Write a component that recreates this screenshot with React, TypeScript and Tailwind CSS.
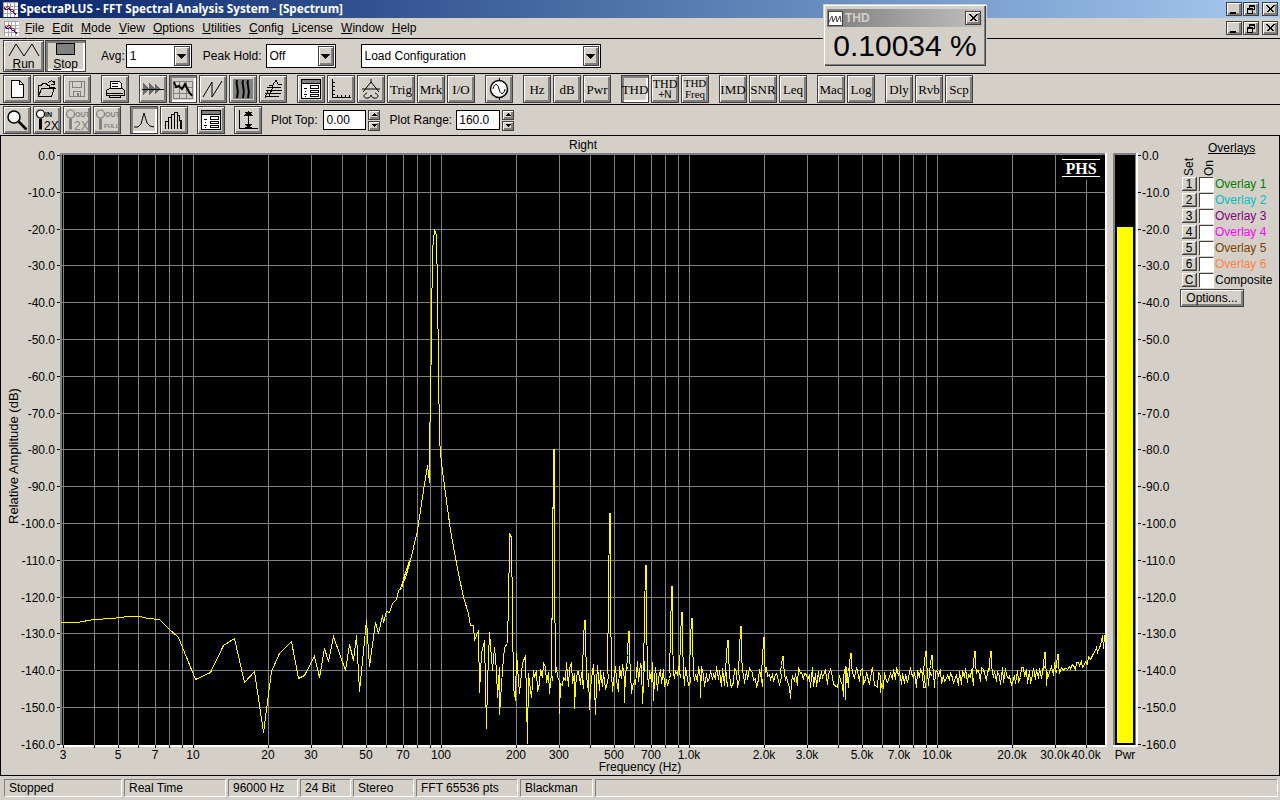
import React from "react";

const SANS = "font-['Liberation_Sans',Arial,sans-serif]";
const RAISED = "border border-[#404040] shadow-[inset_1px_1px_0_#ffffff,inset_-2px_-2px_0_#808080]";
const PRESSED = "border border-[#404040] shadow-[inset_2px_2px_0_#808080,inset_-2px_-2px_0_#ffffff]";

function Btn({ children, pressed, className = "" }: { children?: React.ReactNode; pressed?: boolean; className?: string }) {
  return (
    <div className={`w-[28px] h-[28px] shrink-0 flex flex-col items-center justify-center bg-[#d4d0c8] leading-none ${pressed ? PRESSED : RAISED} ${className}`}>
      {children}
    </div>
  );
}

function Ico({ children }: { children: React.ReactNode }) {
  return (
    <svg width="22" height="22" viewBox="0 0 22 22" shapeRendering="crispEdges" fill="none" stroke="#000" strokeWidth="1">
      {children}
    </svg>
  );
}

function TextBtn({ t, pressed }: { t: string; pressed?: boolean }) {
  return (
    <Btn pressed={pressed}>
      <span className="font-['Liberation_Serif',serif] text-[13px] text-black">{t}</span>
    </Btn>
  );
}

function Arrow() {
  return (
    <svg width="9" height="5" viewBox="0 0 9 5" shapeRendering="crispEdges">
      <path d="M0 0h9L4.5 5z" fill="#000" />
    </svg>
  );
}

function Select({ value, w }: { value: string; w: string }) {
  return (
    <div className={`h-[24px] ${w} border border-black bg-white flex items-center justify-between pl-[3px] pr-[1px] text-[12px] text-black`}>
      <span>{value}</span>
      <div className={`w-[16px] h-[20px] bg-[#d4d0c8] flex items-center justify-center ${RAISED}`}>
        <Arrow />
      </div>
    </div>
  );
}

function Spin() {
  return (
    <div className="flex flex-col gap-[1px] ml-[2px]">
      <div className={`w-[12px] h-[10px] bg-[#d4d0c8] flex items-center justify-center ${RAISED}`}>
        <svg width="5" height="3" viewBox="0 0 5 3" shapeRendering="crispEdges"><path d="M0 3h5L2.5 0z" fill="#000" /></svg>
      </div>
      <div className={`w-[12px] h-[10px] bg-[#d4d0c8] flex items-center justify-center ${RAISED}`}>
        <svg width="5" height="3" viewBox="0 0 5 3" shapeRendering="crispEdges"><path d="M0 0h5L2.5 3z" fill="#000" /></svg>
      </div>
    </div>
  );
}

function WinBtn({ kind }: { kind: "min" | "max" | "x" }) {
  return (
    <div className={`w-[16px] h-[14px] bg-[#d4d0c8] flex items-center justify-center ${RAISED} border-[#404040]`}>
      <svg width="10" height="9" viewBox="0 0 10 9" shapeRendering="crispEdges" fill="none" stroke="#000">
        {kind === "min" && <path d="M1 7.5h6M1 8.5h6" />}
        {kind === "max" && <path d="M3.5 2.5v-2h5v4h-2M3.5 1.5h5M1.5 3.5h5v5h-5zM1.5 4.5h5" />}
        {kind === "x" && <path d="M1.5 .5l7 7M2.5 .5l7 7M8.5 .5l-7 7M9.5 .5l-7 7" />}
      </svg>
    </div>
  );
}

function FormIcon() {
  return (
    <Ico>
      <rect x="1.5" y="1.5" width="19" height="19" fill="#fff" />
      <rect x="2" y="2" width="18" height="3" fill="#808080" stroke="none" />
      <path d="M1.5 5.5h19" />
      <rect x="10.5" y="7.5" width="8" height="3" />
      <rect x="10.5" y="12.5" width="8" height="2" />
      <rect x="10.5" y="16.5" width="8" height="2" />
      <path d="M4 10h3M5 13h1M4 16h3M5 18h1" />
    </Ico>
  );
}

function MagGlass({ color = "#000", kind }: { color?: string; kind: "in" | "out" | "full" }) {
  const word = kind === "in" ? "IN" : "OUT";
  return (
    <svg width="25" height="25" viewBox="0 0 25 25" fill="none">
      <circle cx="5.5" cy="6" r="4" stroke={color} strokeWidth="1.2" fill={kind === "in" ? "#fff" : "none"} />
      <path d="M5.5 10.5v11" stroke={color} strokeWidth="3" />
      <text x="10" y="9" fontSize="7" fontWeight="700" fill={color} fontFamily="Liberation Sans, Arial, sans-serif">{word}</text>
      {kind === "full"
        ? <text x="9" y="20" fontSize="6" fontWeight="700" fill={color} fontFamily="Liberation Sans, Arial, sans-serif">FULL</text>
        : <text x="9" y="22" fontSize="12" fill={color} fontFamily="Liberation Sans, Arial, sans-serif">2X</text>}
    </svg>
  );
}

const F0 = 441;
const DEC = 248;
const fx = (f: number) => Math.round(F0 + Math.log10(f / 100) * DEC);
const dy = (db: number) => Math.round(155 - (db / 10) * 36.8);

const gridF: number[] = [];
[10, 100, 1000, 10000].forEach((d) => {
  for (let i = 1; i < 10; i++) {
    const f = d * i;
    if (f <= 40000) gridF.push(f);
  }
});
gridF.push(3, 4, 5, 6, 7, 8, 9);

const xLabels: [number, string][] = [
  [3, "3"], [5, "5"], [7, "7"], [10, "10"], [20, "20"], [30, "30"], [50, "50"], [70, "70"], [100, "100"], [200, "200"], [300, "300"], [500, "500"], [700, "700"],
  [1000, "1.0k"], [2000, "2.0k"], [3000, "3.0k"], [5000, "5.0k"], [7000, "7.0k"], [10000, "10.0k"], [20000, "20.0k"], [30000, "30.0k"], [40000, "40.0k"],
];

const z7 = [[60,187],[110,187],[160,178],[215,173],[265,169],[298,169],[325,174],[358,177],[385,203],[415,232],[465,357],[510,335],[548,255],[583,235],[613,367],[642,333],[668,515],[692,333],[718,280],[753,243],[773,354],[792,345],[822,287],[838,352],[853,265],[865,302],[880,229],[915,330],[928,253],[938,300],[948,225],[958,392],[978,180],[988,317],[1005,185],[1015,220],[1025,165],[1030,187],[1038,152],[1047,157],[1055,128],[1068,118],[1075,90],[1085,82],[1090,58],[1098,45],[1108,0]];
const z8a = [[0,445],[15,410],[30,360],[50,270],[70,150],[82,75],[86,125]];
const peak = [[429,440],[430,405],[432,250],[434,229],[436,235],[437,290],[439,440]];
const z8b = [[122,70],[135,160],[150,270],[170,385],[190,470],[205,520],[210,555],[218,555],[222,600],[235,570],[238,757],[243,640],[253,600],[258,865],[260,730],[266,575],[275,690],[283,620],[288,690],[290,770],[296,680],[298,823],[305,690],[312,620],[320,610],[324,480],[326,320],[328,278],[333,290],[336,520],[338,740],[344,780],[349,640],[356,760],[366,670],[374,645],[380,910],[384,700],[392,770],[400,690]];

type Spike = [number, number, number];
const spikes: Spike[] = [
  [553, 449, 570], [584, 620, 640], [609, 513, 598], [628, 631, 655], [645, 565, 617], [671, 586, 637], [681, 612, 640], [691, 618, 640],
  [727, 640, 655], [740, 626, 652], [763, 637, 660], [782, 656, 665], [850, 653, 665], [925, 651, 662], [931, 655, 665], [974, 651, 665], [990, 651, 665], [1044, 652, 665], [1057, 654, 665],
];
const dips: [number, number][] = [[559, 713], [574, 708], [589, 709], [595, 714], [624, 702], [642, 703], [653, 700], [700, 697], [790, 698], [843, 696], [845, 699], [880, 692], [1046, 685]];

function buildTrace(): string {
  const pts: number[][] = [];
  z7.forEach(([x, y]) => pts.push([40 + x / 3, 560 + y / 3]));
  z8a.forEach(([x, y]) => pts.push([400 + x / 3, 440 + y / 3]));
  peak.forEach((p) => pts.push(p));
  z8b.forEach(([x, y]) => pts.push([400 + x / 3, 440 + y / 3]));
  let seed = 12345;
  const rnd = () => {
    seed = (seed * 1664525 + 1013904223) >>> 0;
    return seed / 4294967296;
  };
  const base = (x: number) => {
    if (x < 1000) return 677;
    if (x < 1060) return 677 - ((x - 1000) / 60) * 7;
    if (x < 1085) return 670 - ((x - 1060) / 25) * 8;
    return 662 - ((x - 1085) / 18) * 20;
  };
  const amp = (x: number) => (x < 700 ? 16 : x < 900 ? 11 : x < 1060 ? 10 : 4);
  let sp = 0;
  let dp = 0;
  let up = true;
  for (let x = 534; x < 1101; x += 1.5) {
    while (sp < spikes.length && spikes[sp][0] <= x) {
      const [sx, top, mid] = spikes[sp++];
      pts.push([sx - 2, 670], [sx - 1, mid], [sx, top], [sx + 1, top], [sx + 1, mid], [sx + 2, 672]);
      x = sx + 2.5;
    }
    while (dp < dips.length && dips[dp][0] <= x) {
      pts.push([dips[dp][0], dips[dp][1]]);
      dp++;
    }
    const a = amp(x);
    const r = rnd();
    const y = base(x) + (up ? -1 : 1) * Math.pow(r, 1.3) * a;
    up = rnd() > 0.3 ? !up : up;
    pts.push([x, y]);
  }
  pts.push([1102, 635], [1103, 648], [1104, 635]);
  return "M" + pts.map(([x, y]) => `${Math.round(x) + 0.5} ${Math.round(y) + 0.5}`).join("L");
}

const trace = buildTrace();

function Chart() {
  const gridStroke = "#808080";
  const dbs = Array.from({ length: 17 }, (_, i) => i * 10 * -1 || 0);
  const txt = { fontFamily: "Liberation Sans, Arial, sans-serif", fontSize: 12, fill: "#000" };
  return (
    <svg width="1175" height="639" viewBox="1 136 1175 639" className="shrink-0 block">
      <text x="583" y="149" textAnchor="middle" {...txt}>Right</text>
      <g shapeRendering="crispEdges">
        <rect x="60" y="153" width="1045" height="2" fill="#808080" />
        <rect x="60" y="153" width="2" height="592" fill="#808080" />
        <rect x="1105" y="153" width="2" height="594" fill="#fff" />
        <rect x="60" y="745" width="1047" height="2" fill="#fff" />
        <rect x="62" y="155" width="1043" height="590" fill="#000" />
        {gridF.map((f) => (
          <g key={f}>
            <rect x={fx(f)} y="155" width="1" height="590" fill={gridStroke} />
            <rect x={fx(f)} y="745" width="1" height="3" fill="#000" />
          </g>
        ))}
        {dbs.slice(1, 16).map((d) => (
          <rect key={d} x="62" y={dy(d)} width="1043" height="1" fill={gridStroke} />
        ))}
        {dbs.map((d) => (
          <rect key={d} x="57" y={dy(d)} width="3" height="1" fill="#000" />
        ))}
        <rect x="1058" y="155" width="47" height="25" fill="#000" />
        <path d={trace} fill="none" stroke="#ffff00" strokeWidth="1" />
        <rect x="1062" y="159" width="38" height="1" fill="#fff" />
        <rect x="1062" y="176" width="38" height="1" fill="#fff" />

        <rect x="1113" y="153" width="23" height="592" fill="#808080" />
        <rect x="1115" y="155" width="20" height="590" fill="#000" />
        <rect x="1136" y="153" width="2" height="594" fill="#fff" />
        <rect x="1113" y="745" width="25" height="2" fill="#fff" />
        <rect x="1117" y="227" width="16" height="516" fill="#ffff00" />
        {dbs.map((d) => (
          <rect key={d} x="1138" y={dy(d)} width="3" height="1" fill="#000" />
        ))}
      </g>
      <text x="1081" y="174" textAnchor="middle" fontFamily="Liberation Serif, serif" fontWeight="700" fontSize="16" fill="#fff">PHS</text>
      {dbs.map((d) => (
        <text key={d} x="55" y={dy(d) + 5} textAnchor="end" {...txt}>{d === 0 ? "0.0" : `${d}.0`}</text>
      ))}
      {dbs.map((d) => (
        <text key={d} x="1142" y={dy(d) + 5} {...txt}>{d === 0 ? "0.0" : `${d}.0`}</text>
      ))}
      {xLabels.map(([f, l]) => (
        <text key={f} x={fx(f)} y="759" textAnchor="middle" {...txt}>{l}</text>
      ))}
      <text x="1125" y="759" textAnchor="middle" {...txt}>Pwr</text>
      <text x="640" y="771" textAnchor="middle" {...txt}>Frequency (Hz)</text>
      <text transform="translate(18 456) rotate(-90)" textAnchor="middle" {...txt} fontSize="13">Relative Amplitude (dB)</text>
    </svg>
  );
}

const overlays: [string, string, string][] = [
  ["1", "Overlay 1", "text-[#008000]"],
  ["2", "Overlay 2", "text-[#00c0c0]"],
  ["3", "Overlay 3", "text-[#800080]"],
  ["4", "Overlay 4", "text-[#ff00ff]"],
  ["5", "Overlay 5", "text-[#804000]"],
  ["6", "Overlay 6", "text-[#ff8040]"],
  ["C", "Composite", "text-black"],
];

function OverlayPanel() {
  return (
    <div className="w-[103px] shrink-0 flex flex-col text-[12px] leading-none text-black">
      <div className="pl-[32px] pt-[6px] h-[20px] underline">Overlays</div>
      <div className="flex h-[20px] pl-[7px] gap-[4px]">
        <div className="w-[12px] [writing-mode:vertical-rl] rotate-180 text-left">Set</div>
        <div className="w-[12px] ml-[4px] [writing-mode:vertical-rl] rotate-180 text-left">On</div>
      </div>
      <div className="flex flex-col">
        {overlays.map(([n, l, c]) => (
          <div key={n} className="flex items-center h-[16px] pl-[6px]">
            <div className={`w-[15px] h-[14px] bg-[#d4d0c8] flex items-center justify-center border-b border-r border-[#404040] shadow-[inset_1px_1px_0_#ffffff,inset_-1px_-1px_0_#808080]`}>{n}</div>
            <div className="w-[14px] h-[14px] ml-[2px] bg-white border-t border-l border-[#404040] shadow-[1px_1px_0_#ffffff]" />
            <span className={`ml-[2px] whitespace-nowrap ${c}`}>{l}</span>
          </div>
        ))}
      </div>
      <div className={`mt-[1px] ml-[4px] w-[64px] h-[18px] bg-[#d4d0c8] flex items-center justify-center ${RAISED}`}>Options...</div>
    </div>
  );
}

const status: [string, string][] = [
  ["Stopped", "w-[118px]"], ["Real Time", "w-[102px]"], ["96000 Hz", "w-[70px]"], ["24 Bit", "w-[51px]"], ["Stereo", "w-[61px]"], ["FFT 65536 pts", "w-[102px]"], ["Blackman", "w-[73px]"], ["", "flex-1"],
];

const menus = ["File", "Edit", "Mode", "View", "Options", "Utilities", "Config", "License", "Window", "Help"];

function AppIcon({ s }: { s: number }) {
  return (
    <svg width={s} height={s} viewBox="0 0 16 16" shapeRendering="crispEdges" className="shrink-0">
      <rect width="16" height="16" fill="#fff" />
      <path d="M0 .5h16M.5 0v16M4.5 0v16M8.5 0v16M12.5 0v16M0 4.5h16M0 8.5h16M0 12.5h16" stroke="#a0a0a0" />
      <path d="M1 5l2 2 2-3 3 4 2-1 2 5 2 1" fill="none" stroke="#c00000" />
      <path d="M1 7l3 1 2-1 3 3 2 1 3 3" fill="none" stroke="#0000c0" />
    </svg>
  );
}

export default function App() {
  return (
    <div className={`${SANS} relative w-[1280px] h-[800px] overflow-hidden bg-[#d4d0c8] flex flex-col text-[12px] text-black`}>
      {/* Title bar */}
      <div className="h-[18px] shrink-0 flex items-center bg-gradient-to-r from-[#0a246a] to-[#a6caf0] pl-[3px] pr-[2px]">
        <AppIcon s={15} />
        <span className="ml-[2px] font-['Noto_Sans',sans-serif] font-bold text-[11.7px] text-white whitespace-nowrap leading-none">SpectraPLUS - FFT Spectral Analysis System - [Spectrum]</span>
        <div className="ml-auto flex gap-[1px]">
          <WinBtn kind="min" /><WinBtn kind="max" /><div className="w-px" /><WinBtn kind="x" />
        </div>
      </div>
      {/* Menu */}
      <div className="h-[21px] shrink-0 flex items-center pl-[4px] pr-[2px] border-b border-black">
        <AppIcon s={15} />
        <div className="ml-[6px] flex gap-[8px] whitespace-nowrap">
          {menus.map((m) => (
            <span key={m}><span className="underline">{m[0]}</span>{m.slice(1)}</span>
          ))}
        </div>
        <div className="ml-auto flex gap-[1px]">
          <WinBtn kind="min" /><WinBtn kind="max" /><div className="w-px" /><WinBtn kind="x" />
        </div>
      </div>
      {/* Row 1 */}
      <div className="h-[35px] shrink-0 flex items-center pl-[3px] border-b border-black">
        <div className={`w-[41px] h-[32px] flex flex-col items-center justify-center ${RAISED}`}>
          <svg width="32" height="14" viewBox="0 0 32 14" fill="none" stroke="#000"><path d="M1 13L8 1l8 12 8-12 7 12" /></svg>
          <span className="leading-none mt-[1px]"><span className="underline">R</span>un</span>
        </div>
        <div className={`w-[41px] h-[32px] ml-[1px] flex flex-col items-center justify-center ${PRESSED}`}>
          <div className="w-[19px] h-[12px] bg-[#808080] border border-black" />
          <span className="leading-none mt-[3px]"><span className="underline">S</span>top</span>
        </div>
        <span className="ml-[15px] mr-[1px]">Avg:</span>
        <Select value="1" w="w-[66px]" />
        <span className="ml-[11px] mr-[4px] whitespace-nowrap">Peak Hold:</span>
        <Select value="Off" w="w-[70px]" />
        <div className="ml-[25px]"><Select value="Load Configuration" w="w-[240px]" /></div>
      </div>
      {/* Row 2 */}
      <div className="h-[31px] shrink-0 flex items-center pl-[3px] gap-[2px] border-b border-black">
        <Btn><Ico><path d="M5.5 2.5h8l4 4v13h-12z" fill="#fff" /><path d="M13.5 2.5v4h4" /></Ico></Btn>
        <Btn><Ico><path d="M2.5 18.5v-11h3l1 -2h4l1 2h2v2h5l-3 9z" fill="#d4d0c8" /><path d="M2.5 18.5l3-8h14" /><path d="M12 5c2-3 5-3 6 0M18 3v3h-3" /></Ico></Btn>
        <Btn><Ico><g stroke="#808080"><path d="M3.5 3.5h15v15h-15z" /><path d="M6.5 3.5v6h9v-6M7.5 18.5v-5h7v5" /></g><rect x="11" y="15" width="2" height="3" fill="#808080" stroke="none" /></Ico></Btn>
        <Btn className="ml-[8px]"><Ico><path d="M6.5 10.5v-7l9 0 2 2v5" fill="#fff" /><path d="M2.5 12.5l3-2h13l2 2v5h-18z" fill="#d4d0c8" /><path d="M3 15h16M5.5 17.5v2h11v-2" /><rect x="8" y="5" width="6" height="1" fill="#000" stroke="none" /><rect x="8" y="8" width="6" height="1" fill="#000" stroke="none" /></Ico></Btn>
        <Btn className="ml-[8px]"><Ico><path d="M1 5l6 6-6 6zM7 4l6 7-6 7zM13 5l5 6-5 6z" fill="#6a6a6a" stroke="none" /><path d="M0 11h22" /></Ico></Btn>
        <Btn pressed><Ico><path d="M1.5 3.5h19v17h-19zM7.5 3.5v17M14.5 3.5v17M1.5 9.5h19M1.5 15.5h19" stroke="#808080" /><path d="M2 4l2 5 3-1 3 3 3-5 2 4 2 4 3 4" strokeWidth="2" shapeRendering="auto" /></Ico></Btn>
        <Btn><Ico><path d="M1 19L10 4v15L20 3" shapeRendering="auto" /></Ico></Btn>
        <Btn><Ico><rect x="1" y="1" width="20" height="20" fill="#808080" stroke="none" /><path d="M5 2c-2 5 3 8 0 18M11 2c-2 5 3 8 0 18M16 2c-2 5 3 8 0 18" strokeWidth="2" shapeRendering="auto" /></Ico></Btn>
        <Btn><Ico><path d="M3 19l5-1h9M3 16l5-1h11M4 13l5-1h11M5 10l5-1h9M7 8l4-1 3-5 2 4h4" /><path d="M3 20l3-8M7 19l4-11" /></Ico></Btn>
        <Btn className="ml-[8px]"><FormIcon /></Btn>
        <Btn><Ico><path d="M2.5 1v18.5H21" /><path d="M2 4h3M2 8h3M2 12h3M2 16h3M7 17v3M11 17v3M15 17v3M19 17v3" /></Ico></Btn>
        <Btn><Ico><path d="M11 1v4M11 4L3 14M11 4l8 10M2 11h18M7 15c-5 2-3 6 1 5 2 0 2-1 3-3 1 2 1 3 3 3 4 1 6-3 1-5" shapeRendering="auto" /></Ico></Btn>
        <TextBtn t="Trig" /><TextBtn t="Mrk" /><TextBtn t="I/O" />
        <Btn className="ml-[8px]"><Ico><circle cx="11" cy="11" r="8.5" fill="#fff" strokeWidth="1.5" shapeRendering="auto" /><path d="M11 0v3M11 19v3" /><path d="M5 11c1-6 5-6 6 0s5 6 6 0" shapeRendering="auto" /></Ico></Btn>
        <div className="ml-[8px]"><TextBtn t="Hz" /></div>
        <TextBtn t="dB" /><TextBtn t="Pwr" />
        <div className="ml-[8px]"><Btn pressed><span className="text-[13px] font-['Liberation_Serif',serif]">THD</span></Btn></div>
        <Btn><span className="font-['Liberation_Serif',serif] text-[12px]">THD</span><span className="text-[10px]">+N</span></Btn>
        <Btn><span className="font-['Liberation_Serif',serif] text-[11px]">THD</span><span className="font-['Liberation_Serif',serif] text-[11px]">Freq</span></Btn>
        <div className="ml-[8px]"><TextBtn t="IMD" /></div>
        <TextBtn t="SNR" /><TextBtn t="Leq" />
        <div className="ml-[8px]"><TextBtn t="Mac" /></div>
        <TextBtn t="Log" />
        <div className="ml-[8px]"><TextBtn t="Dly" /></div>
        <TextBtn t="Rvb" /><TextBtn t="Scp" />
      </div>
      {/* Row 3 */}
      <div className="h-[31px] shrink-0 flex items-center pl-[3px] border-b border-black">
        <div className="flex gap-[2px]">
          <Btn><Ico><circle cx="8" cy="8" r="6" fill="#fff" strokeWidth="1.5" shapeRendering="auto" /><path d="M12.5 12.5l8 8" strokeWidth="2.5" shapeRendering="auto" /></Ico></Btn>
          <Btn><MagGlass kind="in" /></Btn>
          <Btn><MagGlass kind="out" color="#808080" /></Btn>
          <Btn><MagGlass kind="full" color="#808080" /></Btn>
        </div>
        <div className="flex gap-[2px] ml-[9px]">
          <Btn pressed><Ico><path d="M1 18h4l3-3 3-11 3 10 3 3 4 1" shapeRendering="auto" /></Ico></Btn>
          <Btn><Ico><path d="M2.5 20v-8h3v-4h3v-3h3v-2h3v3h2v5h2v9M5.5 12v8M8.5 8v12M11.5 5v15M14.5 6v14M17.5 11v9" /></Ico></Btn>
        </div>
        <div className="ml-[9px]"><Btn><FormIcon /></Btn></div>
        <div className="ml-[9px]"><Btn><Ico><path d="M2.5 1v18.5H21" /><path d="M11.5 2v16M8 3h7M8 18h7" /><path d="M8 6l3.5-3L15 6zM8 15l3.5 3 3.5-3z" fill="#000" /></Ico></Btn></div>
        <span className="ml-[9px] whitespace-nowrap">Plot Top:</span>
        <div className="ml-[6px] w-[43px] h-[20px] bg-white border border-black pl-[2px] flex items-center text-[12px]">0.00</div>
        <Spin />
        <span className="ml-[9px] whitespace-nowrap">Plot Range:</span>
        <div className="ml-[4px] w-[44px] h-[20px] bg-white border border-black pl-[2px] flex items-center text-[12px]">160.0</div>
        <Spin />
      </div>
      {/* Main */}
      <div className="h-[640px] shrink-0 flex border-b border-black border-l border-r">
        <Chart />
        <OverlayPanel />
      </div>
      {/* Status bar */}
      <div className="flex-1 flex items-center pl-[4px] pr-[2px] pb-[1px] gap-[2px]">
        {status.map(([t, w], i) => (
          <div key={i} className={`${w} h-[18px] flex items-center pl-[4px] border-t border-l border-t-[#808080] border-l-[#808080] border-b border-r border-b-white border-r-white whitespace-nowrap`}>{t}</div>
        ))}
      </div>
      {/* Floating THD window */}
      <div className={`absolute left-[823px] top-[4px] w-[164px] h-[63px] bg-[#d4d0c8] p-[2px] border border-[#d4d0c8] shadow-[inset_1px_1px_0_#ffffff,inset_-1px_-1px_0_#404040,inset_-2px_-2px_0_#808080]`}>
        <div className="h-[18px] mt-[2px] mx-[1px] flex items-center bg-gradient-to-r from-[#808080] to-[#c0c0c0] pl-[1px] pr-[2px]">
          <div className="w-[15px] h-[15px] bg-white border border-[#404040] flex items-center justify-center">
            <svg width="13" height="7" viewBox="0 0 13 7" fill="none" stroke="#404040"><path d="M0 7l3-6 1 6 3-6 1 6 3-6 1 6" /></svg>
          </div>
          <span className="ml-[2px] font-bold text-[12px] text-[#d4d0c8] leading-none">THD</span>
          <div className="ml-auto"><WinBtn kind="x" /></div>
        </div>
        <div className="text-[30px] leading-[38px] text-center whitespace-nowrap">0.10034 %</div>
      </div>
    </div>
  );
}
